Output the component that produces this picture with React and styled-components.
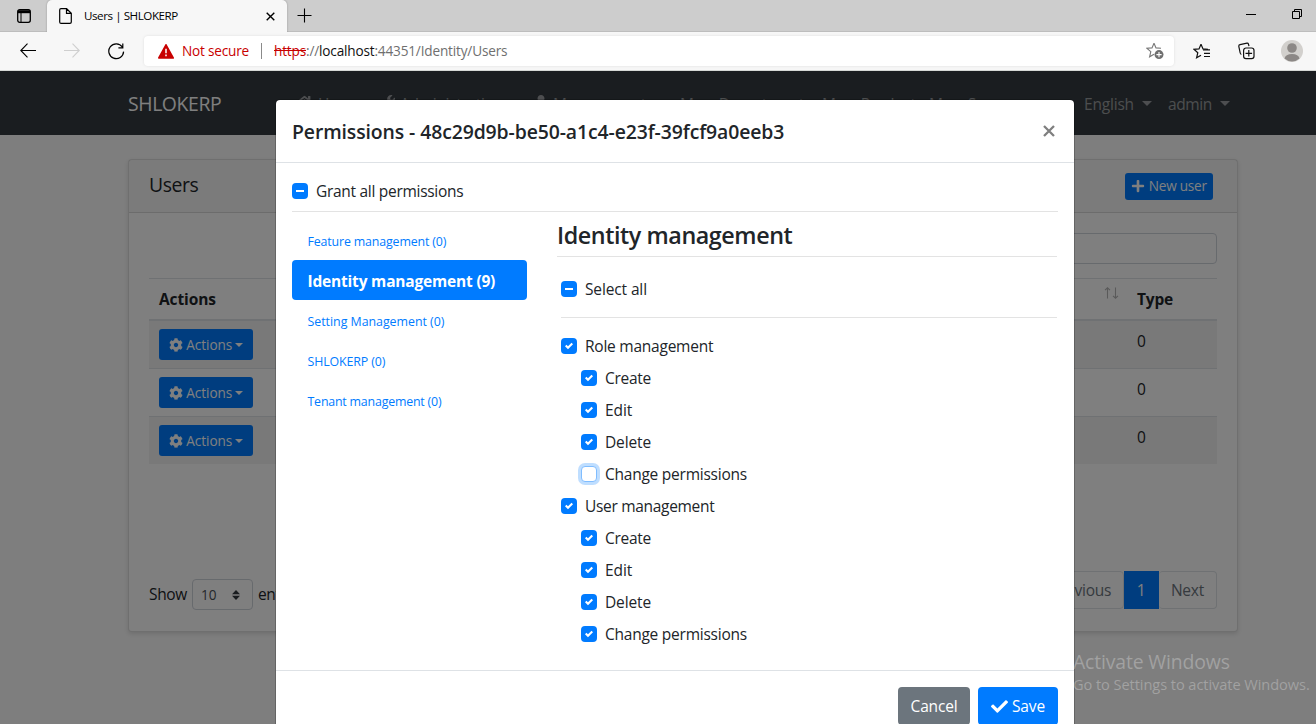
import React from "react";
import styled, { createGlobalStyle, css } from "styled-components";
import { FaCog, FaPlus, FaCheck, FaHome, FaWrench, FaUser } from "react-icons/fa";

const Global = createGlobalStyle`
  *, *::before, *::after { box-sizing: border-box; }
  body { margin: 0; overflow: hidden; background: #fff; }
  h3, h4, h5 { margin: 0; }
  svg { display: block; flex: none; }
`;

const Window = styled.div`
  width: 1316px;
  height: 724px;
  display: flex;
  flex-direction: column;
  position: relative;
  overflow: hidden;
  color: #212529;
  font: 400 15.5px/24px "Open Sans", "Noto Sans", sans-serif;
  white-space: nowrap;
`;

const Spaced = styled.span`
  letter-spacing: ${(p) => p.$by}px;
`;

/* ---------- browser chrome ---------- */

const TabStrip = styled.div`
  height: 32px;
  display: flex;
  background: #cdcdcd;
  box-shadow: inset 0 -1px #bdbdbd;
  color: #000;
`;

const TabMenu = styled.div`
  width: 47px;
  padding: 9px 0 0 17px;
`;

const BrowserTab = styled.div`
  width: 240px;
  padding: 0 12px 0 12px;
  display: flex;
  align-items: center;
  background: #f7f7f7;
  border-radius: 5px 5px 0 0;
  box-shadow: 0 0 2px rgba(0, 0, 0, 0.3);
  clip-path: inset(0 -3px 0 -3px);
  font-size: 11.64px;
`;

const TabTitle = styled.span`
  margin-left: 12px;
  flex: 1;
  line-height: 32px;
  letter-spacing: -0.45px;
`;

const NewTab = styled.div`
  padding: 8px 0 0 10px;
  flex: 1;
`;

const WindowControls = styled.div`
  display: flex;
  gap: 36px;
  padding: 9px 14px 0 0;
`;

const Toolbar = styled.div`
  height: 39px;
  display: flex;
  align-items: center;
  padding: 0 12px 0 20px;
  background: #f7f7f7;
  border-bottom: 1px solid #d5d8d5;
`;

const NavButtons = styled.div`
  width: 124px;
  display: flex;
  gap: 28px;
`;

const AddressBar = styled.div`
  width: 1030px;
  height: 30px;
  padding: 0 10px 0 14px;
  display: flex;
  align-items: center;
  background: #fff;
  border-radius: 4px;
  box-shadow: 0 0 3px rgba(0, 0, 0, 0.1);
  font-size: 13.6px;
`;

const Warning = styled.span`
  width: 79px;
  margin-left: 8px;
  color: #c80000;
  letter-spacing: -0.2px;
`;

const Url = styled.span`
  flex: 1;
  height: 16px;
  padding-left: 12px;
  border-left: 1px solid #8a8a8a;
  line-height: 15px;
  color: #6f6f6f;
  letter-spacing: -0.17px;
`;

const Scheme = styled.span`
  color: #c80000;
  text-decoration: line-through;
`;

const Host = styled.span`
  color: #111;
`;

const ToolbarIcons = styled.div`
  display: flex;
  align-items: center;
  gap: 26px;
  margin-left: 19px;
`;

/* ---------- site behind the dialog ---------- */

const Site = styled.div`
  flex: 1;
  position: relative;
  overflow: hidden;
  background: #fcfcfc;
`;

const Navbar = styled.div`
  height: 64px;
  padding: 0 0 0 128px;
  display: flex;
  align-items: center;
  background: #343a40;
  color: rgba(255, 255, 255, 0.5);
`;

const Brand = styled.div`
  width: 168px;
  padding-top: 2px;
  font-size: 19.4px;
  letter-spacing: -0.4px;
  color: #fff;
`;

const NavItem = styled.div`
  width: ${(p) => p.$width}px;
  display: flex;
  align-items: center;
  gap: 5px;
  padding-top: 1px;
  word-spacing: ${(p) => p.$words || 0}px;
  letter-spacing: -0.3px;
`;

const NavIcon = styled.span`
  padding-bottom: 3px;
`;

const Caret = styled.span`
  width: 0;
  border: 5px solid transparent;
  border-width: 5px 5px 0;
  border-top-color: currentColor;
  margin-left: ${(p) => p.$gap}px;
`;

const SmallCaret = styled(Caret)`
  border-width: 4px 4px 0;
  margin-left: 3px;
`;

const Card = styled.div`
  width: 1110px;
  height: 473px;
  margin: 24px 0 0 128px;
  display: flex;
  flex-direction: column;
  background: #fff;
  border: 1px solid rgba(0, 0, 0, 0.125);
  border-radius: 4px;
  box-shadow: 0 2px 4px rgba(0, 0, 0, 0.12);
`;

const CardHeader = styled.div`
  height: 53px;
  padding: 0 24px 0 20px;
  display: flex;
  align-items: center;
  justify-content: space-between;
  background: rgba(0, 0, 0, 0.03);
  border-bottom: 1px solid rgba(0, 0, 0, 0.125);
`;

const CardTitle = styled.h5`
  padding-bottom: 2px;
  font-size: 19.4px;
  font-weight: 500;
  letter-spacing: -0.4px;
`;

const CardBody = styled.div`
  flex: 1;
  padding: 20px;
  display: flex;
  flex-direction: column;
`;

const BlueButton = styled.div`
  height: ${(p) => p.$height}px;
  width: ${(p) => p.$width}px;
  display: flex;
  align-items: center;
  justify-content: center;
  border-radius: 3px;
  background: #007bff;
  color: #fff;
  font-size: 13.6px;
`;

const SearchInput = styled.div`
  width: 230px;
  height: 31px;
  align-self: flex-end;
  border: 1px solid #ced4da;
  border-radius: 4px;
`;

const Table = styled.div`
  margin-top: 14px;
`;

const gridColumns = css`
  display: grid;
  grid-template-columns: 955px 23px 90px;
`;

const HeadRow = styled.div`
  ${gridColumns}
  height: 43px;
  border-top: 1px solid #dee2e6;
  border-bottom: 2px solid #dee2e6;
  font-weight: 700;
  line-height: 41px;
`;

const Row = styled.div`
  ${gridColumns}
  height: ${(p) => (p.$first ? 47 : 48)}px;
  border-top: ${(p) => (p.$first ? 0 : 1)}px solid #dee2e6;
  background: ${(p) => (p.$striped ? "rgba(0,0,0,.05)" : "transparent")};
`;

const Cell = styled.div`
  padding: ${(p) => p.$top || 0}px 10px 0;
`;

const SortArrows = styled.div`
  padding-top: 8px;
`;

const TableFooter = styled.div`
  margin-top: auto;
  height: 40px;
  display: flex;
  justify-content: space-between;
`;

const Length = styled.div`
  display: flex;
  align-items: center;
  gap: 5px;
  height: 31px;
  margin-top: 8px;
`;

const LengthText = styled.span`
  padding-bottom: 2px;
  letter-spacing: -0.35px;
`;

const Select = styled.div`
  width: 61px;
  height: 31px;
  padding: 0 12px 0 8px;
  display: flex;
  align-items: center;
  justify-content: space-between;
  border: 1px solid #ced4da;
  border-radius: 4px;
  font-size: 13.6px;
  color: #495057;
`;

const Pagination = styled.div`
  display: flex;
  height: 38px;
`;

const PageLink = styled.div`
  width: ${(p) => p.$width}px;
  text-align: center;
  line-height: 37px;
  letter-spacing: -0.2px;
  border: 1px solid ${(p) => (p.$active ? "#007bff" : "#dee2e6")};
  border-left-width: ${(p) => (p.$first ? 1 : 0)}px;
  border-radius: ${(p) => (p.$active ? 0 : 4)}px;
  background: ${(p) => (p.$active ? "#007bff" : "#fff")};
  color: ${(p) => (p.$active ? "#fff" : "#6c757d")};
`;

const Backdrop = styled.div`
  position: absolute;
  inset: 0;
  background: rgba(0, 0, 0, 0.5);
`;

/* ---------- dialog ---------- */

const Dialog = styled.div`
  position: absolute;
  top: 28px;
  left: 275px;
  width: 800px;
  background: #fff;
  background-clip: padding-box;
  border: 1px solid rgba(0, 0, 0, 0.2);
  border-radius: 5px;
`;

const DialogHeader = styled.div`
  height: 63px;
  padding: 0 19px 0 16px;
  display: flex;
  align-items: center;
  justify-content: space-between;
  border-bottom: 1px solid #dee2e6;
`;

const DialogTitle = styled.h5`
  font-size: 19.4px;
  font-weight: 550;
  letter-spacing: -0.1px;
  line-height: 30px;
  margin-top: 1px;
`;

const DialogBody = styled.div`
  height: 507px;
  padding: 16px;
`;

const GrantRow = styled.div`
  height: 33px;
  border-bottom: 1px solid #e3e3e3;
`;

const Columns = styled.div`
  display: flex;
  gap: 30px;
  padding-top: 8px;
`;

const Tabs = styled.div`
  width: 235px;
`;

const Tab = styled.div`
  height: 40px;
  padding-left: 15.5px;
  line-height: ${(p) => (p.$active ? 42 : 43)}px;
  border-radius: 4px;
  font-size: ${(p) => (p.$active ? 15.5 : 12.4)}px;
  font-weight: ${(p) => (p.$active ? 700 : 400)};
  color: ${(p) => (p.$active ? "#fff" : "#007bff")};
  background: ${(p) => (p.$active ? "#007bff" : "transparent")};
`;

const Panel = styled.div`
  width: 500px;
`;

const PanelTitle = styled.h4`
  height: 37px;
  line-height: 31px;
  font-size: 23.3px;
  font-weight: 550;
  border-bottom: 1px solid #e3e3e3;
`;

const PanelBody = styled.div`
  padding: 20px 0 0 4px;
`;

const SelectAll = styled.div`
  height: 41px;
  margin-bottom: 12px;
  border-bottom: 1px solid #e3e3e3;
`;

const CheckRow = styled.div`
  height: 24px;
  display: flex;
  align-items: center;
  gap: 8px;
`;

const PermissionRow = styled(CheckRow)`
  height: 32px;
  padding-left: ${(p) => (p.$child ? 20 : 0)}px;
`;

const CheckLabel = styled.span`
  letter-spacing: ${(p) => p.$by}px;
`;

const Box = styled.span`
  width: 16px;
  height: 16px;
  display: flex;
  align-items: center;
  justify-content: center;
  border-radius: 4px;
  background: #007bff;
  ${(p) =>
    p.$empty &&
    css`
      background: #fff;
      border: 1px solid #80bdff;
      box-shadow: 0 0 0 3px rgba(0, 123, 255, 0.25);
    `}
`;

const DialogFooter = styled.div`
  height: 72px;
  padding: 16px;
  display: flex;
  justify-content: flex-end;
  gap: 8px;
  border-top: 1px solid #dee2e6;
`;

const FooterButton = styled.div`
  width: ${(p) => p.$width}px;
  height: 38px;
  display: flex;
  align-items: center;
  justify-content: center;
  gap: 4px;
  border-radius: 4px;
  color: #fff;
  background: ${(p) => (p.$primary ? "#007bff" : "#6c757d")};
`;

const Watermark = styled.div`
  position: absolute;
  left: 1073px;
  top: 649px;
  color: rgba(255, 255, 255, 0.28);
  font-size: 14.6px;
  line-height: 18px;
  letter-spacing: -0.07px;
`;

const WatermarkTitle = styled.div`
  font-size: 19.4px;
  line-height: 26px;
  letter-spacing: -0.15px;
`;

function Check({ state }) {
  if (state === "empty") return <Box $empty />;
  return (
    <Box>
      <svg width="8" height="8" viewBox={state === "mixed" ? "0 0 4 4" : "0 0 8 8"}>
        {state === "mixed" ? (
          <path d="M0 2h4" stroke="#fff" />
        ) : (
          <path fill="#fff" d="M6.564.75l-3.59 3.612-1.538-1.55L0 4.26l2.974 2.99L8 2.193z" />
        )}
      </svg>
    </Box>
  );
}

const tabs = [
  ["Feature management (0)", -0.15],
  ["Identity management (9)", -0.19],
  ["Setting Management (0)", -0.03],
  ["SHLOKERP (0)", -0.12],
  ["Tenant management (0)", -0.2],
];

const permissions = [
  ["Role management", false, -0.24],
  ["Create", true, -0.28],
  ["Edit", true, -0.1],
  ["Delete", true, -0.14],
  ["Change permissions", true, -0.24, "empty"],
  ["User management", false, -0.31],
  ["Create", true, -0.28],
  ["Edit", true, -0.1],
  ["Delete", true, -0.14],
  ["Change permissions", true, -0.24],
];

const starPath = "M8 1.2L10 5.9L15 6.3M8 1.2L6 5.9L1 6.3L4.8 9.7L3.6 14.8L8 12.2";

function Chrome() {
  return (
    <>
      <TabStrip>
        <TabMenu>
          <svg width="14" height="14" viewBox="0 0 14 14" fill="none" stroke="#000">
            <rect x=".7" y=".7" width="12.6" height="12.6" rx="2" strokeWidth="1.3" />
            <path d="M1 2.7h12" strokeWidth="3" />
            <path d="M4 4v9" />
          </svg>
        </TabMenu>
        <BrowserTab>
          <svg width="13" height="16" viewBox="0 0 13 16" fill="none" stroke="#000" strokeWidth="1.2">
            <path d="M2 .7h5.6L12.3 5.3v8.6q0 1.4-1.4 1.4H2.1Q.7 15.3.7 13.9V2Q.7.7 2 .7zM7.5.8v4.6h4.7" />
          </svg>
          <TabTitle>Users | SHLOKERP</TabTitle>
          <svg width="9" height="9" viewBox="0 0 9 9" stroke="#000" strokeWidth="1.4">
            <path d="M.7.7l7.6 7.6M8.3.7L.7 8.3" />
          </svg>
        </BrowserTab>
        <NewTab>
          <svg width="15" height="15" viewBox="0 0 15 15" stroke="#000" strokeWidth="1.1">
            <path d="M7.5 .5v14M.5 7.5h14" />
          </svg>
        </NewTab>
        <WindowControls>
          <svg width="10" height="10" viewBox="0 0 10 10" stroke="#000">
            <path d="M0 5.5h10" />
          </svg>
          <svg width="10" height="10" viewBox="0 0 10 10" fill="none" stroke="#000">
            <path d="M.5 2.5h7v7h-7zM2.5 2.5v-2h7v7h-2" />
          </svg>
        </WindowControls>
      </TabStrip>
      <Toolbar>
        <NavButtons>
          <svg width="16" height="16" viewBox="0 0 16 16" fill="none" stroke="#000" strokeWidth="1.1">
            <path d="M16 7.5H.8M7.5.7L.8 7.5l6.700 6.800" />
          </svg>
          <svg width="16" height="16" viewBox="0 0 16 16" fill="none" stroke="#cfcfcf" strokeWidth="1.1">
            <path d="M0 7.5h15.2M8.5.7L15.200 7.500l-6.700 6.800" />
          </svg>
          <svg width="17" height="17" viewBox="0 0 17 17" fill="none" stroke="#000" strokeWidth="1.2">
            <path d="M14.3 4A7.4 7.4 0 1 0 15.600 8.600M14.800.5v4.400h-4.400" />
          </svg>
        </NavButtons>
        <AddressBar>
          <svg width="16" height="15" viewBox="0 0 16 15">
            <path d="M8 .8L15.2 14H.8z" fill="#c80000" stroke="#c80000" strokeWidth="1.6" strokeLinejoin="round" />
            <path d="M8 4.8v4.4M8 10.6v1.7" stroke="#fff" strokeWidth="1.5" />
          </svg>
          <Warning>Not secure</Warning>
          <Url>
            <Scheme>https</Scheme>://<Host>localhost</Host>:44351/Identity/Users
          </Url>
          <svg width="18" height="18" viewBox="0 0 18 18" fill="none" stroke="#777" strokeWidth="1.1">
            <path d={starPath} />
            <circle cx="13" cy="12.6" r="4.5" fill="#6f6f6f" stroke="none" />
            <path d="M13 10v5.2M10.4 12.6h5.2" stroke="#fff" />
          </svg>
        </AddressBar>
        <ToolbarIcons>
          <svg width="18" height="17" viewBox="0 0 18 17" fill="none" stroke="#111" strokeWidth="1.2">
            <path d={starPath} />
            <path d="M10 6.9h7M11 10.4h6M11 13.5h6" />
          </svg>
          <svg width="18" height="18" viewBox="0 0 18 18" fill="none" stroke="#111" strokeWidth="1.2">
            <path d="M12 4.2L11.4 2Q11 1 10 1.2L3 2.7Q1.6 3 1.8 4.3L3.2 11Q3.5 12.3 4.4 12.4" />
            <rect x="6.6" y="6" width="10.4" height="10.6" rx="2.4" />
            <path d="M11.8 8v6.6M8.5 11.3h6.6" />
          </svg>
          <svg width="22" height="22" viewBox="0 0 22 22">
            <circle cx="11" cy="11" r="11" fill="#d2d0cd" />
            <circle cx="11" cy="8" r="4.8" fill="#8c8886" />
            <path d="M3.5 18.5Q4.5 14 11 14t7.5 4.5A11 11 0 0 1 3.5 18.5z" fill="#8c8886" />
          </svg>
        </ToolbarIcons>
      </Toolbar>
    </>
  );
}

function UsersPage() {
  return (
    <>
      <Navbar>
        <Brand>SHLOKERP</Brand>
        <NavItem $width={85}><NavIcon><FaHome size={17} /></NavIcon>Home</NavItem>
        <NavItem $width={153}><NavIcon><FaWrench size={14} /></NavIcon>Administration</NavItem>
        <NavItem $width={146}><NavIcon><FaUser size={14} /></NavIcon>Management</NavItem>
        <NavItem $width={142} $words={4}>Map Department</NavItem>
        <NavItem $width={107} $words={4}>Map Product</NavItem>
        <NavItem $width={155} $words={4}>Map Screen</NavItem>
        <NavItem $width={84}><Spaced $by={-0.19}>English</Spaced><Caret $gap={3} /></NavItem>
        <NavItem $width={76}><Spaced $by={-0.38}>admin</Spaced><Caret $gap={3} /></NavItem>
      </Navbar>
      <Card>
        <CardHeader>
          <CardTitle>Users</CardTitle>
          <BlueButton $width={88} $height={27}>
            <FaPlus size={14} />&nbsp;<Spaced $by={-0.24}>New user</Spaced>
          </BlueButton>
        </CardHeader>
        <CardBody>
          <SearchInput />
          <Table>
            <HeadRow>
              <Cell><Spaced $by={-0.1}>Actions</Spaced></Cell>
              <SortArrows>
                <svg width="15" height="12" viewBox="0 0 15 12" fill="none" stroke="#b4b4b4" strokeWidth="1.1">
                  <path d="M3.5 11.5V1M1 3.2L3.5.8 6 3.2M11.5.5V11M9 8.8l2.5 2.4L14 8.8" />
                </svg>
              </SortArrows>
              <Cell><Spaced $by={-0.2}>Type</Spaced></Cell>
            </HeadRow>
            {[0, 1, 2].map((i) => (
              <Row key={i} $first={i === 0} $striped={i !== 1}>
                <Cell $top={8}>
                  <BlueButton $width={94} $height={31}>
                    <FaCog size={14} />&nbsp;<Spaced $by={-0.05}>Actions</Spaced><SmallCaret />
                  </BlueButton>
                </Cell>
                <span />
                <Cell $top={8}>0</Cell>
              </Row>
            ))}
          </Table>
          <TableFooter>
            <Length>
              <LengthText>Show</LengthText>
              <Select>
                10
                <svg width="8" height="10" viewBox="0 0 8 10" fill="#343a40">
                  <path d="M4 0l4 4.3H0zM0 5.7h8L4 10z" />
                </svg>
              </Select>
              <LengthText>entries</LengthText>
            </Length>
            <Pagination>
              <PageLink $width={86} $first>Previous</PageLink>
              <PageLink $width={35} $active>1</PageLink>
              <PageLink $width={58}>Next</PageLink>
            </Pagination>
          </TableFooter>
        </CardBody>
      </Card>
    </>
  );
}

function PermissionsDialog() {
  return (
    <Dialog>
      <DialogHeader>
        <DialogTitle>Permissions - 48c29d9b-be50-a1c4-e23f-39fcf9a0eeb3</DialogTitle>
        <svg width="12" height="12" viewBox="0 0 12 12" stroke="#7f7f7f" strokeWidth="2.3">
          <path d="M1 1l10 10M11 1L1 11" />
        </svg>
      </DialogHeader>
      <DialogBody>
        <GrantRow>
          <CheckRow>
            <Check state="mixed" />
            <CheckLabel $by={-0.29}>Grant all permissions</CheckLabel>
          </CheckRow>
        </GrantRow>
        <Columns>
          <Tabs>
            {tabs.map(([label, by], i) => (
              <Tab key={label} $active={i === 1}><Spaced $by={by}>{label}</Spaced></Tab>
            ))}
          </Tabs>
          <Panel>
            <PanelTitle><Spaced $by={-0.42}>Identity management</Spaced></PanelTitle>
            <PanelBody>
              <SelectAll>
                <CheckRow>
                  <Check state="mixed" />
                  <CheckLabel $by={-0.13}>Select all</CheckLabel>
                </CheckRow>
              </SelectAll>
              {permissions.map(([label, child, by, state], i) => (
                <PermissionRow key={i} $child={child}>
                  <Check state={state} />
                  <CheckLabel $by={by}>{label}</CheckLabel>
                </PermissionRow>
              ))}
            </PanelBody>
          </Panel>
        </Columns>
      </DialogBody>
      <DialogFooter>
        <FooterButton $width={72}><Spaced $by={-0.17}>Cancel</Spaced></FooterButton>
        <FooterButton $width={80} $primary>
          <FaCheck size={17} /><Spaced $by={-0.14}>Save</Spaced>
        </FooterButton>
      </DialogFooter>
    </Dialog>
  );
}

export default function App() {
  return (
    <Window>
      <Global />
      <Chrome />
      <Site>
        <UsersPage />
        <Backdrop />
        <PermissionsDialog />
      </Site>
      <Watermark>
        <WatermarkTitle>Activate Windows</WatermarkTitle>
        Go to Settings to activate Windows.
      </Watermark>
    </Window>
  );
}
